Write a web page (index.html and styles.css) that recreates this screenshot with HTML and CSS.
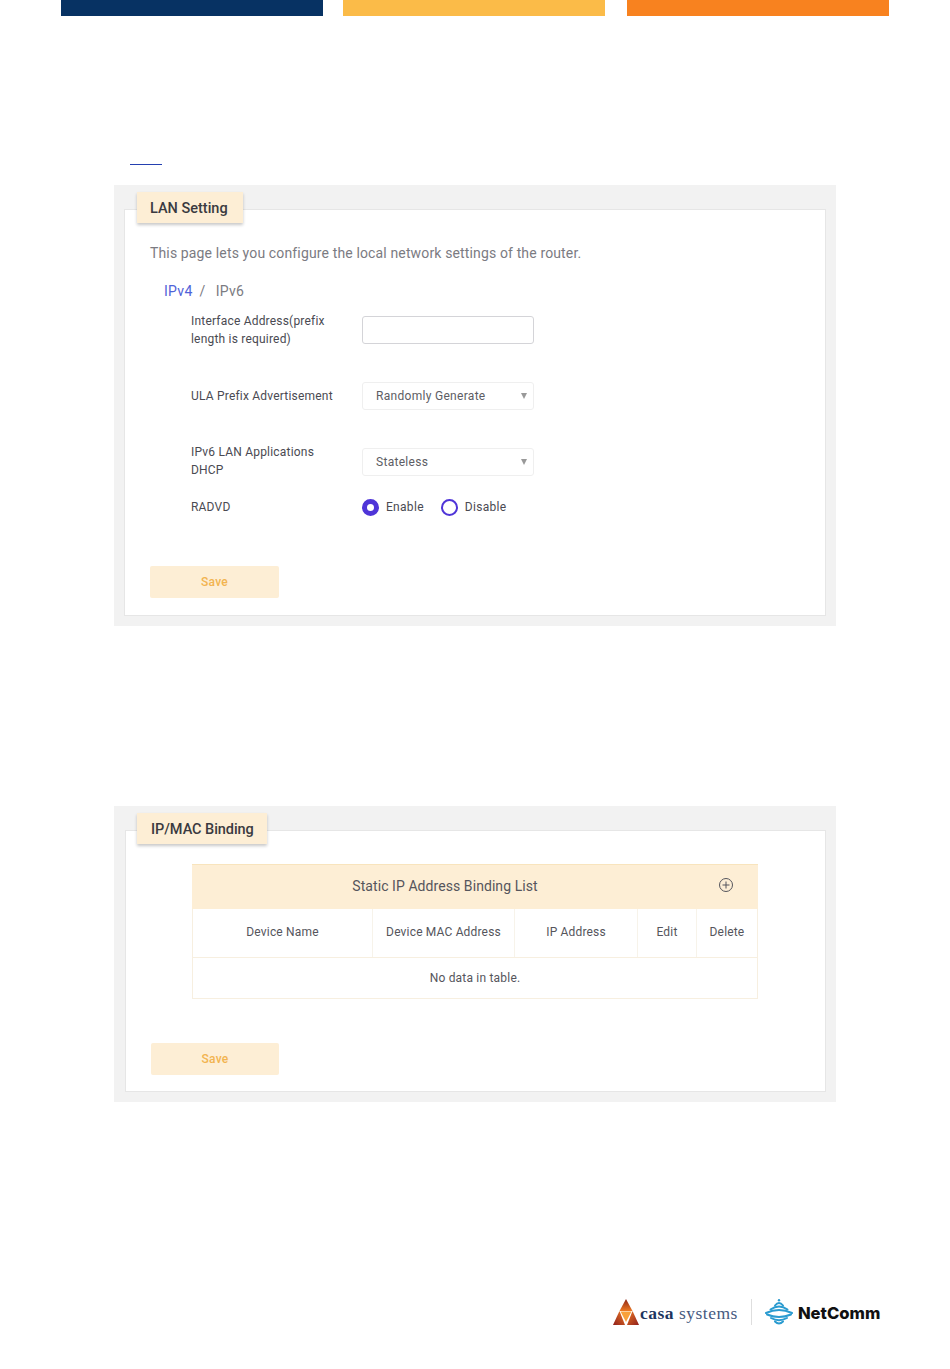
FILE: index.html
```html
<!DOCTYPE html>
<html lang="en">
<head>
<meta charset="utf-8">
<title>LAN Setting</title>
<link rel="stylesheet" href="styles.css">
</head>
<body>
<header class="bars">
  <div class="bar bar-navy"></div>
  <div class="bar bar-amber"></div>
  <div class="bar bar-orange"></div>
</header>
<div class="link-line"></div>
<section class="panel panel-lan">
  <div class="card">
    <h2 class="tab tab-lan">LAN Setting</h2>
    <p class="intro">This page lets you configure the local network settings of the router.</p>
    <div class="crumbs"><span class="crumb-on">IPv4</span><span class="crumb-sep">/</span><span>IPv6</span></div>
    <div class="row row-input">
      <label class="label">Interface Address(prefix length is required)</label>
      <div class="field"></div>
    </div>
    <div class="row row-sel1">
      <label class="label">ULA Prefix Advertisement</label>
      <div class="select">Randomly Generate<span class="caret"></span></div>
    </div>
    <div class="row row-sel2">
      <label class="label">IPv6 LAN Applications DHCP</label>
      <div class="select">Stateless<span class="caret"></span></div>
    </div>
    <div class="row row-radio">
      <label class="label">RADVD</label>
      <div class="radios">
        <span class="radio radio-on"></span><span class="radio-text">Enable</span>
        <span class="radio"></span><span class="radio-text">Disable</span>
      </div>
    </div>
    <button class="save save-lan" type="button">Save</button>
  </div>
</section>
<section class="panel panel-mac">
  <div class="card">
    <h2 class="tab tab-mac">IP/MAC Binding</h2>
    <div class="table">
      <div class="table-head">
        <span>Static IP Address Binding List</span>
        <svg class="plus" viewBox="0 0 16 16" width="16" height="16"><circle cx="8" cy="8" r="6.5"/><path d="M8 4.5v7M4.5 8h7"/></svg>
      </div>
      <div class="table-cols">
        <div class="col col-name">Device Name</div>
        <div class="col col-mac">Device MAC Address</div>
        <div class="col col-ip">IP Address</div>
        <div class="col col-edit">Edit</div>
        <div class="col col-del">Delete</div>
      </div>
      <div class="table-empty">No data in table.</div>
    </div>
    <button class="save save-mac" type="button">Save</button>
  </div>
</section>
<footer class="logos">
  <svg class="casa-mark" viewBox="0 0 26 26" width="26" height="26">
    <defs>
      <linearGradient id="casaTop" x1="0" y1="0" x2="0" y2="1"><stop offset="0" stop-color="#8c2418"/><stop offset="1" stop-color="#ee7a22"/></linearGradient>
      <linearGradient id="casaLeft" x1="1" y1="0" x2="0" y2="1"><stop offset="0" stop-color="#ee7a22"/><stop offset="1" stop-color="#8f1f1c"/></linearGradient>
      <linearGradient id="casaRight" x1="0" y1="0" x2="1" y2="1"><stop offset="0" stop-color="#ee7a22"/><stop offset="1" stop-color="#8f1f1c"/></linearGradient>
    </defs>
    <path d="M13 0L19.5 12H6.5Z" fill="url(#casaTop)"/>
    <path d="M6.5 12L0 26H12Z" fill="url(#casaLeft)"/>
    <path d="M19.5 12L26 26H14Z" fill="url(#casaRight)"/>
    <path d="M7.5 12.5H18.5L13 23Z" fill="#f9a13a"/>
  </svg>
  <span class="casa-word"><b>casa</b> systems</span>
  <span class="logo-rule"></span>
  <svg class="nc-mark" viewBox="0 0 28 26" width="28" height="26">
    <circle class="nc-dot" cx="14" cy="1.2" r="1.2"/>
    <path class="nc-arc" d="M10 6.5Q14 1.5 18 6.5"/>
    <path class="nc-arc" d="M5.5 10.5Q14 4.5 22.5 10.5"/>
    <path class="nc-arc" d="M1 14Q14 8 27 14"/>
    <path class="nc-arc" d="M2 15.5Q14 20.5 26 15.5"/>
    <path class="nc-arc" d="M6 19Q14 23.5 22 19"/>
    <path class="nc-arc" d="M10 22.5Q14 26.5 18 22.5"/>
  </svg>
  <span class="nc-word">NetComm</span>
</footer>
</body>
</html>
```
FILE: styles.css
```css
html, body { margin: 0; padding: 0; background: #fff; }
body { width: 950px; height: 1369px; overflow: hidden; font-family: Roboto, "Liberation Sans", sans-serif; color: #4a4a52; }

.bars { display: flex; margin-left: 61px; height: 16px; }
.bar { width: 262px; }
.bar-navy { background: #073263; }
.bar-amber { margin-left: 20px; background: #fbbb48; }
.bar-orange { margin-left: 22px; background: #f8821f; }

.link-line { width: 32px; height: 1px; margin: 148px 0 20px 130px; background: #2440b0; }

.panel { width: 722px; margin-left: 114px; background: #f2f2f2; padding: 24px 10px 10px; box-sizing: border-box; }
.panel-lan { height: 441px; }
.panel-mac { height: 296px; margin-top: 180px; padding-left: 11px; }
.card { height: 100%; box-sizing: border-box; background: #fff; border: 1px solid #e6e6e6; padding: 0 25px; }

.tab { display: inline-block; height: 31px; margin: -18px 0 0 -13px; line-height: 34px; font-size: 14.5px; font-weight: 500; color: #3a3a40; background: #fdeed5; box-shadow: 0 2px 3px rgba(0,0,0,.22); vertical-align: top; }
.tab-lan { padding: 0 15px 0 13px; }
.tab-mac { margin-left: -14px; padding: 0 13px 0 14px; letter-spacing: -.05px; }

.intro { margin: 14px 0 0; font-size: 14px; line-height: 20px; color: #7b7b82; letter-spacing: .14px; }
.crumbs { display: flex; margin: 18px 0 0 14px; font-size: 14px; line-height: 20px; color: #7b7b82; letter-spacing: .3px; }
.crumb-on { color: #4f62d8; }
.crumb-sep { margin: 0 10px 0 7px; }

.row { display: flex; align-items: flex-start; margin-left: 41px; }
.label { flex: none; width: 171px; font-size: 12px; line-height: 18px; letter-spacing: .2px; color: #4a4a52; padding-right: 20px; box-sizing: border-box; }
.row-input { margin-top: 11px; }
.row-input .field { margin-top: 4px; }
.row-sel1 { margin-top: 34px; }
.row-sel1 .label { padding-top: 5px; }
.row-sel2 { margin-top: 33px; }
.row-sel2 .select { margin-top: 5px; }
.row-radio { margin-top: 19px; }

.field { width: 172px; height: 28px; box-sizing: border-box; background: #fff; border: 1px solid #d4d4d8; border-radius: 3px; }
.select { position: relative; width: 172px; height: 28px; box-sizing: border-box; padding-left: 13px; font-size: 12px; line-height: 26px; letter-spacing: .3px; color: #5d5d64; background: #fff; border: 1px solid #efefef; border-radius: 3px; }
.caret { position: absolute; right: 6px; top: 10px; border-style: solid; border-width: 6px 3px 0; border-color: #999 transparent transparent; }

.radios { display: flex; align-items: center; height: 18px; font-size: 12px; letter-spacing: .3px; }
.radio { width: 17px; height: 17px; box-sizing: border-box; border: 2px solid #4f35d8; border-radius: 50%; background: #fff; }
.radio-on { border: 5px solid #4f35d8; }
.radio-text { margin: 0 17px 0 7px; }

.save { display: block; width: 129px; height: 32px; padding: 0; border: 0; border-radius: 2px; background: #fdeed5; color: #f2b450; font: 500 12px/32px Roboto, "Liberation Sans", sans-serif; letter-spacing: .3px; }
.save-lan { margin-top: 50px; }
.save-mac { width: 128px; margin-top: 44px; }

.table { width: 566px; margin: 14px 0 0 41px; border: 1px solid #f7efe0; border-top: 0; box-sizing: border-box; }
.table-head { position: relative; height: 45px; margin: 0 -1px; background: #fdeed5; border-top: 1px solid #f8e4bd; box-sizing: border-box; text-align: center; font-size: 14px; line-height: 42px; letter-spacing: .07px; color: #55555c; padding-right: 60px; }
.plus { position: absolute; right: 24px; top: 12px; fill: none; stroke: #55555c; stroke-width: 1; }
.table-cols { display: flex; height: 49px; border-bottom: 1px solid #f7efe0; box-sizing: border-box; font-size: 12px; line-height: 46px; letter-spacing: .17px; text-align: center; color: #55555c; }
.col { box-sizing: border-box; border-right: 1px solid #f7f3ea; }
.col-name { width: 180px; }
.col-mac { width: 142px; }
.col-ip { width: 123px; }
.col-edit { width: 59px; }
.col-del { width: 60px; border-right: 0; }
.table-empty { height: 40px; text-align: center; font-size: 12px; line-height: 40px; letter-spacing: .2px; color: #55555c; }

.logos { display: flex; align-items: center; margin: 197px 0 0 613px; height: 26px; }
.casa-mark, .nc-mark { flex: none; }
.nc-dot { fill: #2a9bd0; }
.nc-arc { fill: none; stroke: #2a9bd0; stroke-width: 2; stroke-linecap: round; }
.casa-word { margin-left: 1px; padding-top: 2px; font: 17.5px "Liberation Serif", serif; letter-spacing: .5px; color: #465a80; white-space: nowrap; }
.casa-word b { color: #1c3560; }
.logo-rule { width: 1px; height: 26px; margin: 0 13px; background: #dedede; }
.nc-word { margin-left: 5px; padding-top: 2px; font: 800 16.6px Inter, "Noto Sans", sans-serif; color: #111; white-space: nowrap; }
```
